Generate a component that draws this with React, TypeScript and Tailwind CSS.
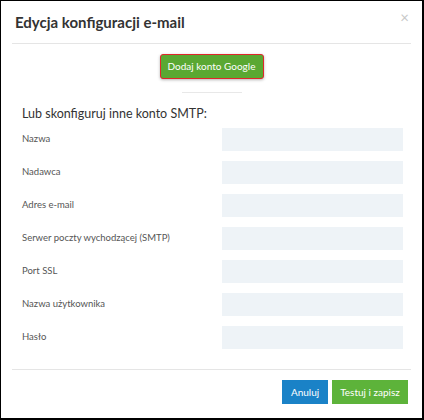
const fields = [
  "Nazwa",
  "Nadawca",
  "Adres e-mail",
  "Serwer poczty wychodzącej (SMTP)",
  "Port SSL",
  "Nazwa użytkownika",
  "Hasło",
];

export default function App() {
  return (
    <div
      className="box-border h-[420px] w-[424px] border-b-2 border-l border-r-2 border-t border-black bg-white text-[#333]"
      style={{ fontFamily: 'Lato, "Open Sans", sans-serif' }}
    >
      <div className="mx-[11px]">
        {/* header */}
        <div className="flex h-[43px] items-center justify-between border-b border-[#e5e5e5] pl-[3px] pr-[2px]">
          <h1 className="pt-[1px] text-[15px] font-bold text-[#333]">Edycja konfiguracji e-mail</h1>
          <span className="-mt-[10px] text-[15px] leading-none text-[#c8c8c8]">×</span>
        </div>

        {/* google */}
        <div className="flex flex-col items-center pt-[10px]">
          <button className="h-[25px] w-[104px] rounded-[3px] border border-[#e0262b] bg-[#5aa832] text-[10px] text-white shadow-[0_1px_3px_rgba(0,0,0,0.3)]">
            Dodaj konto Google
          </button>
          <div className="mt-[13px] h-px w-[60px] bg-[#e8e8e8]" />
        </div>

        {/* smtp */}
        <div className="pl-[10px] pr-[8px]">
          <h2 className="mt-[11px] text-[12.5px] leading-[20px] text-[#333]">Lub skonfiguruj inne konto SMTP:</h2>
          <div className="mt-[4px] flex flex-col gap-[10px]">
            {fields.map((f) => (
              <div key={f} className="flex items-center justify-between">
                <label className="text-[9.5px] text-[#555]">{f}</label>
                <input className="h-[23px] w-[181px] bg-[#eef3f7] outline-none" type={f === "Hasło" ? "password" : "text"} />
              </div>
            ))}
          </div>
        </div>

        {/* footer */}
        <div className="mt-[20px] flex justify-end gap-[4px] border-t border-[#e5e5e5] pr-[3px] pt-[10px]">
          <button className="h-[24px] w-[46px] bg-[#1a82c7] text-[10px] text-white">Anuluj</button>
          <button className="h-[24px] w-[76px] bg-[#5db33a] text-[10px] text-white">Testuj i zapisz</button>
        </div>
      </div>
    </div>
  );
}
